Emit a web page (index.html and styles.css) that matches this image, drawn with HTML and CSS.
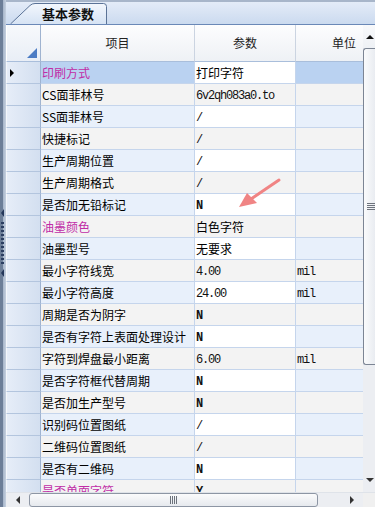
FILE: index.html
```html
<!DOCTYPE html>
<html lang="zh">
<head>
<meta charset="utf-8">
<title>基本参数</title>
<link rel="stylesheet" href="styles.css">
</head>
<body>
<div class="app">
  <div class="splitter">
    <span class="sp-tri"></span>
    <span class="sp-dots"></span>
    <span class="sp-tri"></span>
  </div>
  <div class="main">
    <div class="tabstrip">
      <div class="tab">
        <svg class="tab-shape" viewBox="0 0 97 21" preserveAspectRatio="none">
          <defs>
            <linearGradient id="tg" x1="0" y1="0" x2="0" y2="1">
              <stop offset="0" stop-color="#f3f7fd"/>
              <stop offset="1" stop-color="#d6e3f4"/>
            </linearGradient>
          </defs>
          <path d="M0.5 21 L20 2.5 Q22 0.5 25 0.5 L93.5 0.5 Q96.5 0.5 96.5 3.5 L96.5 21" fill="url(#tg)" stroke="#5b7397" stroke-width="1"/>
        </svg>
        <span class="tab-label">基本参数</span>
      </div>
    </div>
    <div class="gridwrap">
      <div class="grid">
        <div class="hcell corner"><span class="corner-tri"></span></div>
        <div class="hcell">项目</div>
        <div class="hcell">参数</div>
        <div class="hcell unit-h">单位</div>

        <div class="rh"><span class="cur"></span></div>
        <div class="c item sel mag">印刷方式</div>
        <div class="c val w">打印字符</div>
        <div class="c unit sel"></div>

        <div class="rh"></div>
        <div class="c item g">CS面菲林号</div>
        <div class="c val g mono">6v2qh083a0.to</div>
        <div class="c unit g"></div>

        <div class="rh"></div>
        <div class="c item b">SS面菲林号</div>
        <div class="c val w mono">/</div>
        <div class="c unit b"></div>

        <div class="rh"></div>
        <div class="c item g">快捷标记</div>
        <div class="c val g mono">/</div>
        <div class="c unit g"></div>

        <div class="rh"></div>
        <div class="c item b">生产周期位置</div>
        <div class="c val w mono">/</div>
        <div class="c unit b"></div>

        <div class="rh"></div>
        <div class="c item g">生产周期格式</div>
        <div class="c val g mono">/</div>
        <div class="c unit g"></div>

        <div class="rh"></div>
        <div class="c item b">是否加无铅标记</div>
        <div class="c val w mono bold">N</div>
        <div class="c unit b"></div>

        <div class="rh"></div>
        <div class="c item g mag">油墨颜色</div>
        <div class="c val g">白色字符</div>
        <div class="c unit g"></div>

        <div class="rh"></div>
        <div class="c item b">油墨型号</div>
        <div class="c val w">无要求</div>
        <div class="c unit b"></div>

        <div class="rh"></div>
        <div class="c item g">最小字符线宽</div>
        <div class="c val g mono">4.00</div>
        <div class="c unit g mono">mil</div>

        <div class="rh"></div>
        <div class="c item b">最小字符高度</div>
        <div class="c val w mono">24.00</div>
        <div class="c unit b mono">mil</div>

        <div class="rh"></div>
        <div class="c item g">周期是否为阴字</div>
        <div class="c val g mono bold">N</div>
        <div class="c unit g"></div>

        <div class="rh"></div>
        <div class="c item b">是否有字符上表面处理设计</div>
        <div class="c val w mono bold">N</div>
        <div class="c unit b"></div>

        <div class="rh"></div>
        <div class="c item g">字符到焊盘最小距离</div>
        <div class="c val g mono">6.00</div>
        <div class="c unit g mono">mil</div>

        <div class="rh"></div>
        <div class="c item b">是否字符框代替周期</div>
        <div class="c val w mono bold">N</div>
        <div class="c unit b"></div>

        <div class="rh"></div>
        <div class="c item g">是否加生产型号</div>
        <div class="c val g mono bold">N</div>
        <div class="c unit g"></div>

        <div class="rh"></div>
        <div class="c item b">识别码位置图纸</div>
        <div class="c val w mono">/</div>
        <div class="c unit b"></div>

        <div class="rh"></div>
        <div class="c item g">二维码位置图纸</div>
        <div class="c val g mono">/</div>
        <div class="c unit g"></div>

        <div class="rh"></div>
        <div class="c item b">是否有二维码</div>
        <div class="c val w mono bold">N</div>
        <div class="c unit b"></div>

        <div class="rh"></div>
        <div class="c item g mag">是否单面字符</div>
        <div class="c val g mono bold">Y</div>
        <div class="c unit g"></div>
      </div>
      <div class="vscroll">
        <div class="vbtn up"><span class="tri-up"></span></div>
        <div class="vthumb"><span class="vgrip"></span></div>
        <div class="vtrack"></div>
        <div class="vbtn down"><span class="tri-down"></span></div>
      </div>
    </div>
    <div class="hscroll">
      <div class="hbtn"><span class="tri-left"></span></div>
      <div class="hthumb"><span class="hgrip"></span></div>
      <div class="htrack"></div>
      <div class="hbtn"><span class="tri-right"></span></div>
      <div class="hcorner"></div>
    </div>
  </div>
  <svg class="annot" viewBox="0 0 48 34" width="48" height="34">
    <line x1="43" y1="4" x2="15" y2="23" stroke="#f08484" stroke-width="3" stroke-linecap="round"/>
    <polygon points="3,31 11,17 21,27" fill="#f08484"/>
  </svg>
</div>
</body>
</html>
```
FILE: styles.css
```css
* { box-sizing: border-box; margin: 0; padding: 0; }
html, body { width: 375px; height: 507px; overflow: hidden; background: #fff; }
body {
  font-family: "Noto Sans CJK SC", "Noto Sans", sans-serif;
  font-size: 12px;
  color: #000;
}
.app {
  position: relative;
  display: flex;
  width: 375px;
  height: 507px;
}

/* left splitter */
.splitter {
  width: 6px;
  flex: none;
  background: linear-gradient(to right, #6c7e98 0, #6c7e98 3px, #a5b4c9 3px, #c5d0df 6px);
  display: flex;
  flex-direction: column;
  align-items: flex-start;
  padding-top: 209px;
  padding-left: 1px;
  gap: 5px;
}
.sp-tri {
  width: 0; height: 0;
  border-right: 3px solid #24375a;
  border-top: 4px solid transparent;
  border-bottom: 4px solid transparent;
}
.sp-dots {
  width: 3px;
  height: 42px;
  background: repeating-linear-gradient(to bottom, #2c3f62 0 2px, transparent 2px 4px);
}

.main {
  flex: 1;
  min-width: 0;
  display: flex;
  flex-direction: column;
}

/* tab strip */
.tabstrip {
  height: 25px;
  flex: none;
  border-top: 2px solid #a8b6ca;
  border-bottom: 1px solid #6a88b7;
  background: linear-gradient(#e4ecf8, #cbdaef);
  display: flex;
  align-items: flex-end;
  padding-left: 4px;
}
.tab {
  position: relative;
  width: 97px;
  height: 21px;
  display: flex;
  align-items: center;
  padding-left: 32px;
}
.tab-shape {
  position: absolute;
  left: 0; top: 0;
  width: 97px; height: 21px;
}
.tab-label {
  position: relative;
  font-weight: bold;
  font-size: 13px;
  line-height: 21px;
  color: #111;
}

/* grid */
.gridwrap {
  flex: 1;
  min-height: 0;
  display: flex;
  overflow: hidden;
}
.grid {
  width: 357px;
  flex: none;
  display: grid;
  grid-template-columns: 35px 154px 101px 67px;
  grid-template-rows: 37px;
  grid-auto-rows: 22px;
  align-content: start;
  overflow: hidden;
}
.hcell {
  display: flex;
  align-items: center;
  justify-content: center;
  background: linear-gradient(#fdfdfe, #eef1f5);
  border-right: 1px solid #cbd4e1;
  border-bottom: 1px solid #a9bedb;
  color: #222;
  padding-bottom: 1px;
}
.hcell.unit-h {
  justify-content: flex-start;
  padding-left: 36px;
  border-right: none;
}
.hcell.corner {
  justify-content: flex-end;
  align-items: flex-end;
  padding: 0 3px 3px 0;
  background: linear-gradient(#f7f9fc, #e9eef6);
  border-left: 1px solid #ffffff;
  border-right: 1px solid #9fb3d0;
}
.corner-tri {
  width: 0; height: 0;
  border-left: 10px solid transparent;
  border-bottom: 10px solid #4c7cc4;
}
.rh {
  background: linear-gradient(to right, #e6edf8, #d3dff0);
  border-left: 1px solid #f4f7fc;
  border-right: 1px solid #9fb3d0;
  border-bottom: 1px solid #b3c5de;
  display: flex;
  align-items: center;
  padding-left: 3px;
}
.cur {
  width: 0; height: 0;
  border-left: 4px solid #000;
  border-top: 4px solid transparent;
  border-bottom: 4px solid transparent;
}
.c {
  display: flex;
  align-items: center;
  white-space: nowrap;
  overflow: hidden;
  border-right: 1px solid #c5d5ec;
  border-bottom: 1px solid #c5d5ec;
  line-height: 21px;
}
.c.unit { border-right: none; padding-left: 1px; }
.c.item { padding-left: 1px; }
.c.val { padding-left: 1px; }
.c.g { background: #f3f3f3; }
.c.b { background: #e8f0fb; }
.c.w { background: #ffffff; }
.c.sel { background: #bad2f1; }
.c.mag { color: #c02ca6; }
.c.mono {
  font-family: "Liberation Mono", "Noto Sans CJK SC", monospace;
  font-size: 12px;
  letter-spacing: -1.2px;
  color: #111;
  padding-top: 3px;
  line-height: 18px;
}
.c.unit.mono { padding-left: 1px; }
.bold { font-weight: bold; }

/* vertical scrollbar */
.vscroll {
  width: 12px;
  flex: none;
  display: flex;
  flex-direction: column;
  background: #eceef2;
}
.vbtn {
  flex: none;
  height: 22px;
  display: flex;
  justify-content: center;
  align-items: center;
  padding-left: 2px;
}
.vbtn.up { height: 23px; background: linear-gradient(#f8f9fb, #eef1f5); }
.vbtn.down { height: 20px; align-items: flex-start; padding-top: 6px; }
.tri-up {
  width: 0; height: 0;
  border-bottom: 4px solid #111;
  border-left: 4px solid transparent;
  border-right: 4px solid transparent;
}
.tri-down {
  width: 0; height: 0;
  border-top: 4px solid #333;
  border-left: 4px solid transparent;
  border-right: 4px solid transparent;
}
.vthumb {
  flex: none;
  height: 317px;
  border: 1px solid #7c8594;
  border-right: none;
  border-radius: 3px 0 0 3px;
  background: linear-gradient(to right, #fafbfc, #e9ecf1);
  display: flex;
  align-items: center;
  justify-content: flex-end;
}
.vgrip {
  width: 8px;
  height: 7px;
  background: repeating-linear-gradient(to bottom, #6d737c 0 1px, transparent 1px 2px);
}
.vtrack { flex: 1; }

/* horizontal scrollbar */
.hscroll {
  height: 15px;
  flex: none;
  display: flex;
  background: #eceef2;
  border-top: 1px solid #dfe3e9;
}
.hbtn {
  width: 23px;
  flex: none;
  display: flex;
  align-items: center;
  justify-content: center;
}
.tri-left {
  width: 0; height: 0;
  border-right: 4px solid #333;
  border-top: 4px solid transparent;
  border-bottom: 4px solid transparent;
}
.tri-right {
  width: 0; height: 0;
  border-left: 4px solid #333;
  border-top: 4px solid transparent;
  border-bottom: 4px solid transparent;
}
.hthumb {
  width: 289px;
  flex: none;
  border: 1px solid #8d96a4;
  border-radius: 3px;
  background: linear-gradient(#fbfbfc, #e6e9ee);
  display: flex;
  align-items: center;
  justify-content: center;
}
.hgrip {
  width: 7px;
  height: 8px;
  background: repeating-linear-gradient(to right, #6d737c 0 1px, transparent 1px 2px);
}
.htrack { flex: 1; }
.hcorner { width: 12px; flex: none; background: #f0f0f0; }

/* annotation arrow drawn over the grid */
.annot {
  position: absolute;
  left: 236px;
  top: 176px;
}
```
